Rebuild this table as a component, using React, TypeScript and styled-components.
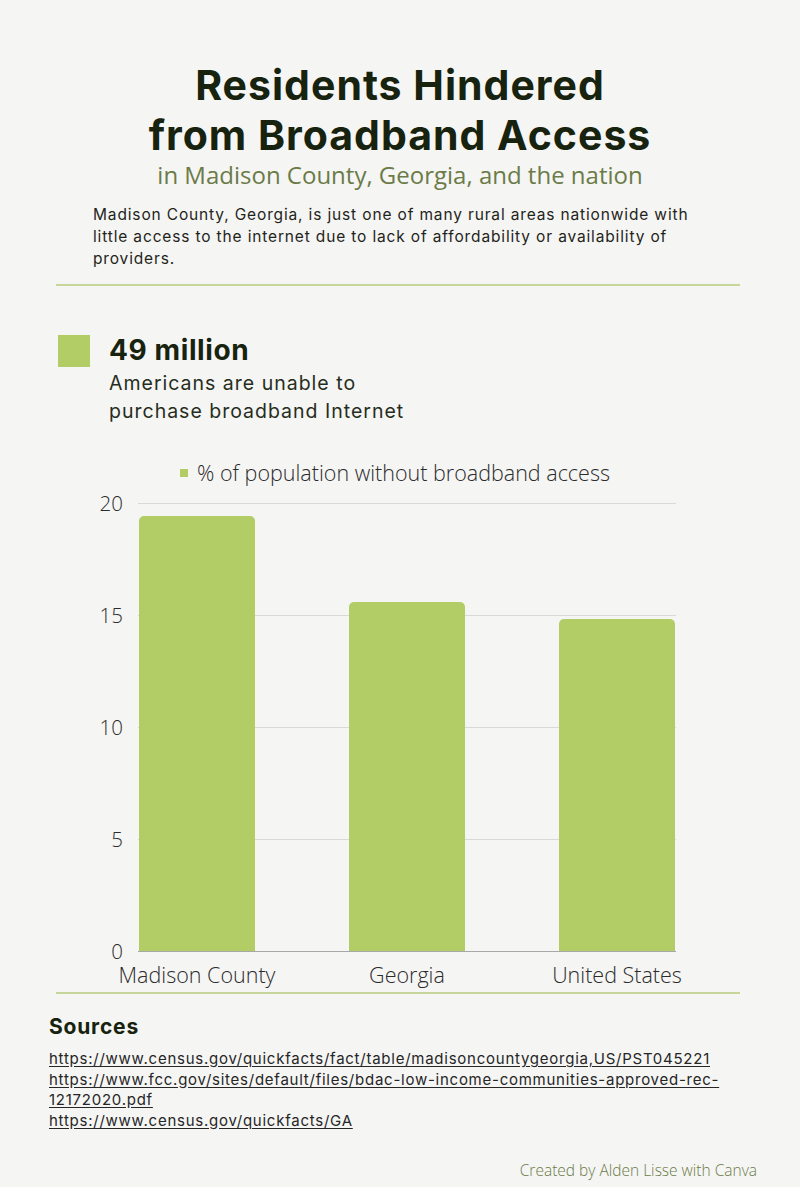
import React from "react";
import styled, { createGlobalStyle } from "styled-components";

const Global = createGlobalStyle`
  html, body { margin: 0; padding: 0; background: #f5f5f4; }
  body { font-family: Inter, "Noto Sans", sans-serif; color: #1d2614; }
  * { box-sizing: border-box; }
`;

const GREEN = "#b2cc66";

const Page = styled.div`
  width: 800px;
  min-height: 1187px;
  background: #f5f5f4;
  padding-top: 60px;
  display: flex;
  flex-direction: column;
`;

const Title = styled.h1`
  margin: 0;
  text-align: center;
  font-family: Inter, sans-serif;
  font-weight: 700;
  font-size: 41px;
  line-height: 50px;
  color: #17230e;
  letter-spacing: 1px;
`;

const Subtitle = styled.div`
  text-align: center;
  font-family: "Open Sans", sans-serif;
  font-weight: 400;
  font-size: 24px;
  line-height: 30px;
  color: #6b7b48;
`;

const Intro = styled.p`
  margin: 14px 0 0 93px;
  width: 605px;
  font-size: 15.5px;
  letter-spacing: 0.85px;
  line-height: 22px;
  color: #1f2419;
`;

const Divider = styled.hr<{ $top: number }>`
  border: none;
  height: 2px;
  background: #c7d69b;
  margin: ${(p) => p.$top}px 60px 0 56px;
`;

const Stat = styled.div`
  display: flex;
  gap: 19px;
  margin: 47px 0 0 58px;
`;

const Square = styled.div`
  width: 32px;
  height: 32px;
  background: ${GREEN};
  flex: none;
  margin-top: 2px;
`;

const StatText = styled.div`
  display: flex;
  flex-direction: column;
`;

const StatNumber = styled.div`
  font-weight: 700;
  font-size: 28px;
  letter-spacing: 0.6px;
  line-height: 34px;
  color: #17230e;
`;

const StatDesc = styled.div`
  font-size: 19.5px;
  letter-spacing: 1px;
  line-height: 28px;
  color: #262d20;
  margin-top: 2px;
`;

const Legend = styled.div`
  display: flex;
  align-items: center;
  gap: 9px;
  margin: 34px 0 0 180px;
  font-family: "Open Sans", sans-serif;
  font-weight: 300;
  font-size: 21.5px;
  line-height: 28px;
  color: #2b2b2b;
`;

const LegendDot = styled.span`
  width: 8px;
  height: 8px;
  background: ${GREEN};
  display: inline-block;
`;

const Chart = styled.div`
  display: flex;
  margin: 16px 0 0 0;
`;

const YAxis = styled.div`
  width: 123px;
  height: 472px;
  margin-top: -12px;
  display: flex;
  flex-direction: column;
  justify-content: space-between;
  align-items: flex-end;
  font-family: "Open Sans", sans-serif;
  font-weight: 300;
  font-size: 20.5px;
  line-height: 24px;
  color: #2b2b2b;
`;

const PlotColumn = styled.div`
  margin-left: 15px;
  width: 538px;
  display: flex;
  flex-direction: column;
`;

const Plot = styled.div`
  display: grid;
  height: 449px;
`;

const GridLayer = styled.div`
  grid-area: 1 / 1;
  display: flex;
  flex-direction: column;
  border-bottom: 1px solid #a8a8a8;
`;

const GridRow = styled.div`
  flex: 1;
  border-top: 1px solid #d9d9d9;
`;

const BarLayer = styled.div`
  grid-area: 1 / 1;
  display: flex;
  justify-content: space-between;
  align-items: flex-end;
  padding: 0 1px 1px;
`;

const Bar = styled.div`
  width: 116px;
  background: ${GREEN};
  border-radius: 5px 5px 0 0;
`;

const XLabels = styled.div`
  display: flex;
  justify-content: space-between;
  padding: 0 1px;
  font-family: "Open Sans", sans-serif;
  font-weight: 300;
  font-size: 21.5px;
  line-height: 26px;
  color: #2b2b2b;
  margin-top: 10px;
`;

const XLabel = styled.div`
  width: 116px;
  display: flex;
  justify-content: center;
  white-space: nowrap;
`;

const SourcesTitle = styled.div`
  font-weight: 700;
  font-size: 21px;
  letter-spacing: 0.8px;
  line-height: 26px;
  margin: 20px 0 0 49px;
  color: #17230e;
`;

const Links = styled.div`
  margin: 9px 0 0 49px;
  width: 700px;
  display: flex;
  flex-direction: column;
`;

const Link = styled.a`
  font-size: 15px;
  letter-spacing: 0.75px;
  line-height: 20.5px;
  color: #262626;
  text-decoration: underline;
  text-underline-offset: 2px;
`;

const Credit = styled.div`
  margin: 29px 43px 0 0;
  text-align: right;
  font-family: "Open Sans", sans-serif;
  font-weight: 300;
  font-size: 15.5px;
  line-height: 20px;
  color: #6b7b48;
`;

const data = [
  { label: "Madison County", value: 19.4 },
  { label: "Georgia", value: 15.6 },
  { label: "United States", value: 14.8 },
];

const MAX = 20;
const PLOT_H = 448;

export default function App() {
  return (
    <Page>
      <Global />
      <Title>
        Residents Hindered
        <br />
        from Broadband Access
      </Title>
      <Subtitle>in Madison County, Georgia, and the nation</Subtitle>
      <Intro>
        Madison County, Georgia, is just one of many rural areas nationwide with
        little access to the internet due to lack of affordability or
        availability of providers.
      </Intro>
      <Divider $top={14} />
      <Stat>
        <Square />
        <StatText>
          <StatNumber>49 million</StatNumber>
          <StatDesc>
            Americans are unable to
            <br />
            purchase broadband Internet
          </StatDesc>
        </StatText>
      </Stat>
      <Legend>
        <LegendDot />
        % of population without broadband access
      </Legend>
      <Chart>
        <YAxis>
          <span>20</span>
          <span>15</span>
          <span>10</span>
          <span>5</span>
          <span>0</span>
        </YAxis>
        <PlotColumn>
          <Plot>
            <GridLayer>
              <GridRow />
              <GridRow />
              <GridRow />
              <GridRow />
            </GridLayer>
            <BarLayer>
              {data.map((d) => (
                <Bar
                  key={d.label}
                  style={{ height: `${(d.value / MAX) * PLOT_H}px` }}
                />
              ))}
            </BarLayer>
          </Plot>
          <XLabels>
            {data.map((d) => (
              <XLabel key={d.label}>{d.label}</XLabel>
            ))}
          </XLabels>
        </PlotColumn>
      </Chart>
      <Divider $top={4} />
      <SourcesTitle>Sources</SourcesTitle>
      <Links>
        <Link href="#">
          https://www.census.gov/quickfacts/fact/table/madisoncountygeorgia,US/PST045221
        </Link>
        <Link href="#">
          https://www.fcc.gov/sites/default/files/bdac-low-income-communities-approved-rec-12172020.pdf
        </Link>
        <Link href="#">https://www.census.gov/quickfacts/GA</Link>
      </Links>
      <Credit>Created by Alden Lisse with Canva</Credit>
    </Page>
  );
}
